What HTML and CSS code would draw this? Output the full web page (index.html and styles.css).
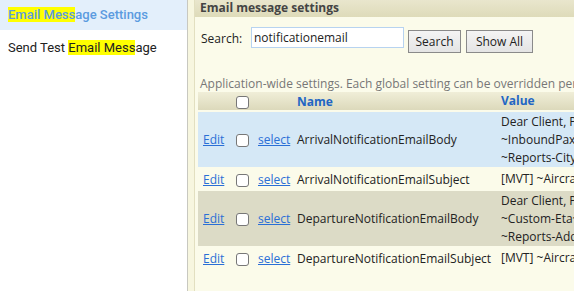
FILE: index.html
```html
<!DOCTYPE html>
<html>
<head>
<meta charset="utf-8">
<link rel="stylesheet" href="styles.css">
</head>
<body>
<div class="layout">
  <nav class="sidebar">
    <div class="nav-item active"><mark>Email Mess</mark>age Settings</div>
    <div class="nav-item">Send Test <mark>Email Mess</mark>age</div>
  </nav>
  <div class="gutter"></div>
  <main class="panel">
    <div class="panel-head">Email message settings</div>
    <div class="search-row">
      <label>Search:</label>
      <input class="search-input" type="text" value="notificationemail">
      <button class="btn btn-search">Search</button>
      <button class="btn btn-all">Show All</button>
    </div>
    <p class="hint">Application-wide settings. Each global setting can be overridden per client.</p>
    <table class="grid">
      <thead>
        <tr>
          <th class="c-edit"></th>
          <th class="c-chk"><span class="chk"></span></th>
          <th class="c-sel"></th>
          <th class="c-name">Name</th>
          <th class="val">Value</th>
        </tr>
      </thead>
      <tbody>
        <tr class="r-blue r-tall">
          <td class="c-edit"><a href="#">Edit</a></td>
          <td class="c-chk"><span class="chk"></span></td>
          <td class="c-sel"><a href="#">select</a></td>
          <td class="c-name">ArrivalNotificationEmailBody</td>
          <td class="val">Dear Client, Please<br>~InboundPax~<br>~Reports-City~</td>
        </tr>
        <tr class="r-plain">
          <td class="c-edit"><a href="#">Edit</a></td>
          <td class="c-chk"><span class="chk"></span></td>
          <td class="c-sel"><a href="#">select</a></td>
          <td class="c-name">ArrivalNotificationEmailSubject</td>
          <td class="val">[MVT] ~Aircraft~</td>
        </tr>
        <tr class="r-tan r-tall">
          <td class="c-edit"><a href="#">Edit</a></td>
          <td class="c-chk"><span class="chk"></span></td>
          <td class="c-sel"><a href="#">select</a></td>
          <td class="c-name">DepartureNotificationEmailBody</td>
          <td class="val">Dear Client, Please<br>~Custom-Eta~<br>~Reports-Address~</td>
        </tr>
        <tr class="r-plain">
          <td class="c-edit"><a href="#">Edit</a></td>
          <td class="c-chk"><span class="chk"></span></td>
          <td class="c-sel"><a href="#">select</a></td>
          <td class="c-name">DepartureNotificationEmailSubject</td>
          <td class="val">[MVT] ~Aircraft~</td>
        </tr>
      </tbody>
    </table>
  </main>
</div>
</body>
</html>
```
FILE: styles.css
```css
html, body {
  margin: 0;
  padding: 0;
  background: #ffffff;
  overflow: hidden;
  height: 291px;
}
.layout {
  display: flex;
  height: 291px;
}
.sidebar {
  width: 187px;
  flex: none;
  border-right: 1px solid #c8c8c0;
  font-family: Roboto, "Liberation Sans", sans-serif;
  font-size: 13px;
}
.nav-item {
  height: 31px;
  line-height: 29px;
  padding-left: 8px;
  color: #222;
  white-space: nowrap;
}
.nav-item.active {
  background: #e3effb;
  color: #5b9be0;
  font-weight: 500;
  height: 30px;
}
.nav-item + .nav-item {
  margin-top: 2px;
  line-height: 32px;
}
mark {
  background: #ffff00;
  color: inherit;
}
.gutter {
  width: 6px;
  flex: none;
  background: #f7f6df;
  border-right: 1px solid #e2dfc0;
}
.panel {
  flex: 1;
  min-width: 0;
  overflow: hidden;
  background: #fbfbea;
  font-family: "Open Sans", "DejaVu Sans", sans-serif;
  font-size: 12px;
  color: #222;
  white-space: nowrap;
}
.panel-head {
  height: 17px;
  line-height: 15px;
  background: linear-gradient(#e9e6cd, #dedbb9);
  font-weight: bold;
  color: #444;
  padding-left: 5px;
}
.search-row {
  display: flex;
  align-items: flex-start;
  padding: 10px 0 0 6px;
  height: 38px;
  box-sizing: border-box;
}
.search-row label {
  margin-top: 3px;
  width: 50px;
  color: #222;
}
.search-input {
  width: 153px;
  height: 21px;
  box-sizing: border-box;
  border: 1px solid #b7d3f0;
  font: inherit;
  padding: 0 2px;
  margin: 0 4px 0 0;
  background: #fff;
  color: #222;
}
.btn {
  font: inherit;
  height: 23px;
  margin: 3px 5px 0 0;
  padding: 0;
  box-sizing: border-box;
  background: linear-gradient(#f4f4f4, #e4e4e4);
  border: 1px solid #8a8a8a;
  color: #222;
}
.btn-search { width: 53px; }
.btn-all { width: 67px; }
.hint {
  margin: 21px 0 0 5px;
  color: #777;
  height: 16px;
  line-height: 16px;
}
.grid {
  table-layout: fixed;
  width: 620px;
  border-collapse: separate;
  border-spacing: 0 2px;
  margin-left: 3px;
  margin-top: -2px;
}
.grid th {
  background: linear-gradient(#f0eed8, #dcd9bb);
  height: 18px;
  text-align: left;
  color: #2266c4;
  font-weight: bold;
}
.grid td {
  vertical-align: middle;
  overflow: hidden;
}
.grid .c-edit { width: 29px; padding: 0 0 0 5px; }
.grid .c-chk { width: 18px; padding: 0 0 0 4px; }
.grid .c-sel { width: 36px; padding: 0 0 0 4px; }
.grid .c-name { width: 201px; padding: 0 0 0 3px; }
.grid .val { padding: 0 0 0 3px; line-height: 18px; }
.grid th.val { line-height: 18px; }
.r-tall td { height: 55px; }
.r-blue td { background: #d5e8f6; }
.r-tan td { background: #dcdbc6; }
.r-plain td { height: 20px; }
.grid a {
  color: #2a6fd6;
  text-decoration: underline;
}
.chk {
  display: inline-block;
  width: 11px;
  height: 11px;
  border: 1px solid #777;
  border-radius: 3px;
  background: #fff;
  vertical-align: middle;
}
```
